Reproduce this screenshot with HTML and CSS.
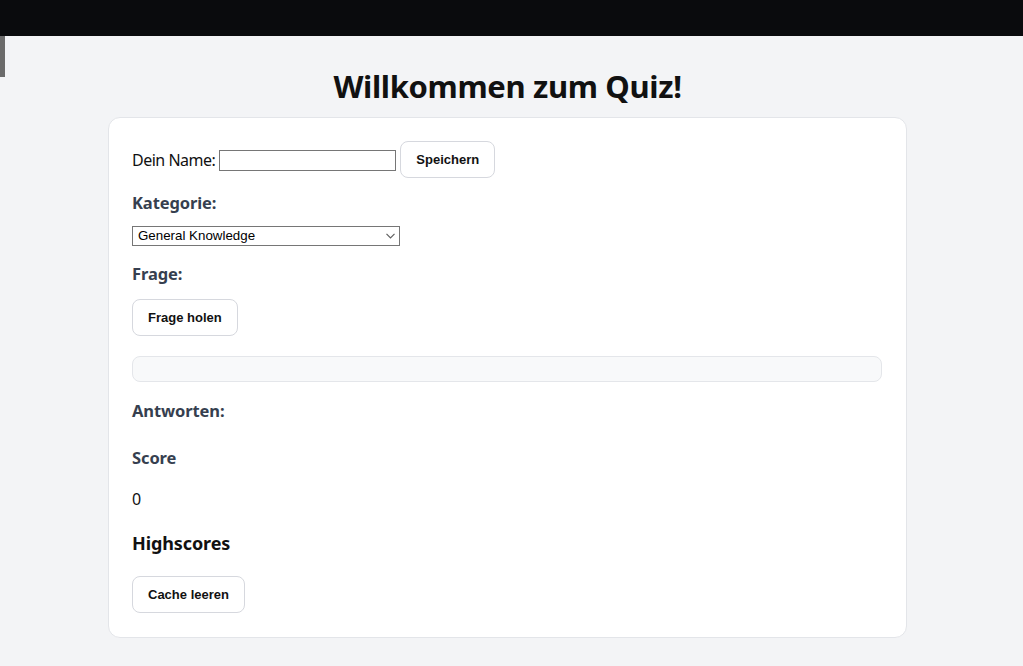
FILE: index.html
```html
<!DOCTYPE html>
<html lang="de">
<head>
<meta charset="utf-8">
<title>Quiz</title>
<link rel="stylesheet" href="styles.css">
</head>
<body>
<div class="topbar"></div>
<div class="edge"></div>
<main class="page">
  <h1 class="title">Willkommen zum Quiz!</h1>
  <section class="card">
    <div class="name-row">
      <label class="name-label" for="name">Dein Name:</label>
      <input class="name-input" id="name" type="text">
      <button class="btn">Speichern</button>
    </div>
    <h3 class="sub sub-cat">Kategorie:</h3>
    <div class="select-wrap">
      <select class="cat">
        <option>General Knowledge</option>
      </select>
      <svg class="chev" width="9" height="6" viewBox="0 0 9 6"><path d="M0.5 0.8 L4.5 4.8 L8.5 0.8" fill="none" stroke="#606060" stroke-width="1.2"/></svg>
    </div>
    <h3 class="sub sub-q">Frage:</h3>
    <button class="btn">Frage holen</button>
    <div class="question"></div>
    <h3 class="sub sub-ans">Antworten:</h3>
    <h3 class="sub sub-score">Score</h3>
    <p class="score">0</p>
    <h2 class="hs">Highscores</h2>
    <button class="btn">Cache leeren</button>
  </section>
</main>
</body>
</html>
```

FILE: styles.css
```css
html, body {
  margin: 0;
  padding: 0;
}
body {
  background: #f3f4f6;
  font-family: "Noto Sans", "Open Sans", sans-serif;
  color: #111111;
  min-height: 666px;
}
.topbar {
  height: 36px;
  background: #0a0b0d;
}
.edge {
  position: absolute;
  left: 0;
  top: 36px;
  width: 5px;
  height: 41px;
  background: #6b6b6b;
}
.page {
  padding: 0 8px 0 0;
  display: flex;
  flex-direction: column;
  align-items: center;
}
.title {
  margin: 28px 0 0;
  font-size: 31px;
  letter-spacing: -0.35px;
  line-height: 44px;
  font-weight: 700;
  color: #111111;
}
.card {
  box-sizing: border-box;
  width: 799px;
  margin-top: 9px;
  background: #ffffff;
  border: 1px solid #e3e5e9;
  border-radius: 12px;
  padding: 23px 24px 24px 23px;
  display: flex;
  flex-direction: column;
  align-items: flex-start;
}
.name-row {
  display: flex;
  align-items: center;
  gap: 4px;
}
.name-label {
  font-size: 16px;
  letter-spacing: -0.5px;
  color: #111111;
}
.name-input {
  box-sizing: border-box;
  width: 177px;
  height: 21px;
  margin: 2px 0 0;
  border: 1px solid #767676;
  padding: 1px 2px;
  font-family: "Liberation Sans", Arial, sans-serif;
  font-size: 13px;
}
.btn {
  box-sizing: border-box;
  height: 37px;
  padding: 0 15px;
  background: #ffffff;
  border: 1px solid #d6d8de;
  border-radius: 8px;
  font-family: "Liberation Sans", Arial, sans-serif;
  font-size: 13px;
  font-weight: 700;
  color: #111111;
}
.sub {
  margin: 13px 0 12px;
  font-size: 16.5px;
  letter-spacing: -0.1px;
  line-height: 24px;
  font-weight: 700;
  color: #363f4f;
}
.sub-cat {
  margin-bottom: 11px;
}
.sub-q {
  margin-top: 16px;
  margin-bottom: 13px;
}
.sub-ans {
  margin-top: 17px;
  margin-bottom: 10px;
}
.sub-score {
  margin-bottom: 17px;
}
.select-wrap {
  position: relative;
  display: flex;
}
.cat {
  appearance: none;
  -webkit-appearance: none;
  box-sizing: border-box;
  width: 268px;
  height: 20px;
  margin: 0;
  padding: 0 2px 0 5px;
  border: 1px solid #767676;
  border-radius: 0;
  background: #ffffff;
  font-family: "Liberation Sans", Arial, sans-serif;
  font-size: 13.333px;
  line-height: 18px;
  color: #000;
}
.chev {
  position: absolute;
  right: 5px;
  top: 7px;
  pointer-events: none;
}
.question {
  box-sizing: border-box;
  width: 100%;
  height: 26px;
  margin-top: 20px;
  background: #f8f9fa;
  border: 1px solid #e4e6ea;
  border-radius: 8px;
}
.score {
  margin: 0 0 12px;
  font-size: 16px;
  line-height: 24px;
}
.hs {
  margin: 7px 0 20px;
  font-size: 18px;
  letter-spacing: -0.1px;
  line-height: 26px;
  font-weight: 700;
  color: #111111;
}
```
